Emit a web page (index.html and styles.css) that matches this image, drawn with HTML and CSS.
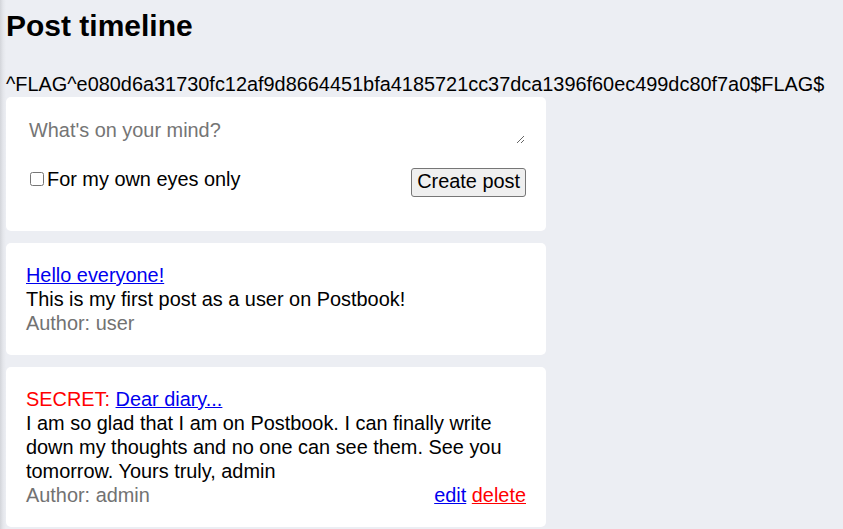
FILE: index.html
```html
<!DOCTYPE html>
<html>
<head>
<meta charset="utf-8">
<title>Post timeline</title>
<link rel="stylesheet" href="styles.css">
</head>
<body>
<div class="page">
  <h1 class="title">Post timeline</h1>
  <p class="flag">^FLAG^e080d6a31730fc12af9d8664451bfa4185721cc37dca1396f60ec499dc80f7a0$FLAG$</p>

  <div class="card composer-card">
    <form class="new-post">
      <textarea class="composer" rows="1" placeholder="What's on your mind?"></textarea>
      <div class="composer-row">
        <label class="private"><input type="checkbox" class="private-box">For my own eyes only</label>
        <button type="button" class="create-btn">Create post</button>
      </div>
    </form>
  </div>

  <div class="card post">
    <a href="#" class="post-title">Hello everyone!</a>
    <div class="post-body">This is my first post as a user on Postbook!</div>
    <div class="post-meta"><span class="author">Author: user</span></div>
  </div>

  <div class="card post">
    <div><span class="secret">SECRET: </span><a href="#" class="post-title">Dear diary...</a></div>
    <div class="post-body">I am so glad that I am on Postbook. I can finally write down my thoughts and no one can see them. See you tomorrow. Yours truly, admin</div>
    <div class="post-meta">
      <span class="author">Author: admin</span>
      <span class="actions"><a href="#" class="edit">edit</a> <a href="#" class="delete">delete</a></span>
    </div>
  </div>
</div>
</body>
</html>
```

FILE: styles.css
```css
html, body {
  margin: 0;
  padding: 0;
}
body {
  font-family: "Liberation Sans", Arial, sans-serif;
  font-size: 19.9px;
  line-height: 24px;
  color: #000;
  background: linear-gradient(to right, #d3d5da 0px, #e4e6eb 3px, #eceef3 6px) #eceef3;
  min-height: 529px;
}
.page {
  padding: 9px 6px 0 6px;
}
.title {
  font-size: 30px;
  line-height: normal;
  font-weight: bold;
  margin: 0 0 29px 0;
}
.flag {
  margin: 0 0 1px 0;
  white-space: nowrap;
}
.card {
  width: 500px;
  background: #fff;
  border-radius: 5px;
  padding: 20px;
  margin-bottom: 12px;
}
.composer-card {
  padding-top: 19px;
  padding-bottom: 22px;
}
.new-post {
  margin: 0;
}
.composer {
  display: block;
  box-sizing: border-box;
  width: 500px;
  height: 29px;
  font: inherit;
  line-height: 23px;
  border: 1px solid transparent;
  padding: 2px;
  margin: 0;
  outline: none;
  background: #fff;
}
.composer::placeholder {
  color: #757575;
}
.composer-row {
  display: flex;
  justify-content: space-between;
  align-items: flex-start;
  margin-top: 22px;
  margin-bottom: 12px;
}
.private {
  display: flex;
  align-items: center;
}
.private-box {
  margin: 3px 3px 3px 4px;
  width: 14px;
  height: 14px;
}
.create-btn {
  font: inherit;
  line-height: 23px;
  margin-top: 1px;
  padding: 1px 5px 3px 5px;
  border: 1px solid #767676;
  border-radius: 3px;
  background: #efefef;
  color: #000;
}
.post-title {
  color: #0000ee;
  text-decoration: underline;
}
.secret {
  color: #ff0000;
}
.post-meta {
  display: flex;
  justify-content: space-between;
}
.author {
  color: #727272;
}
.edit {
  color: #0000ee;
}
.delete {
  color: #ff0000;
}
```
